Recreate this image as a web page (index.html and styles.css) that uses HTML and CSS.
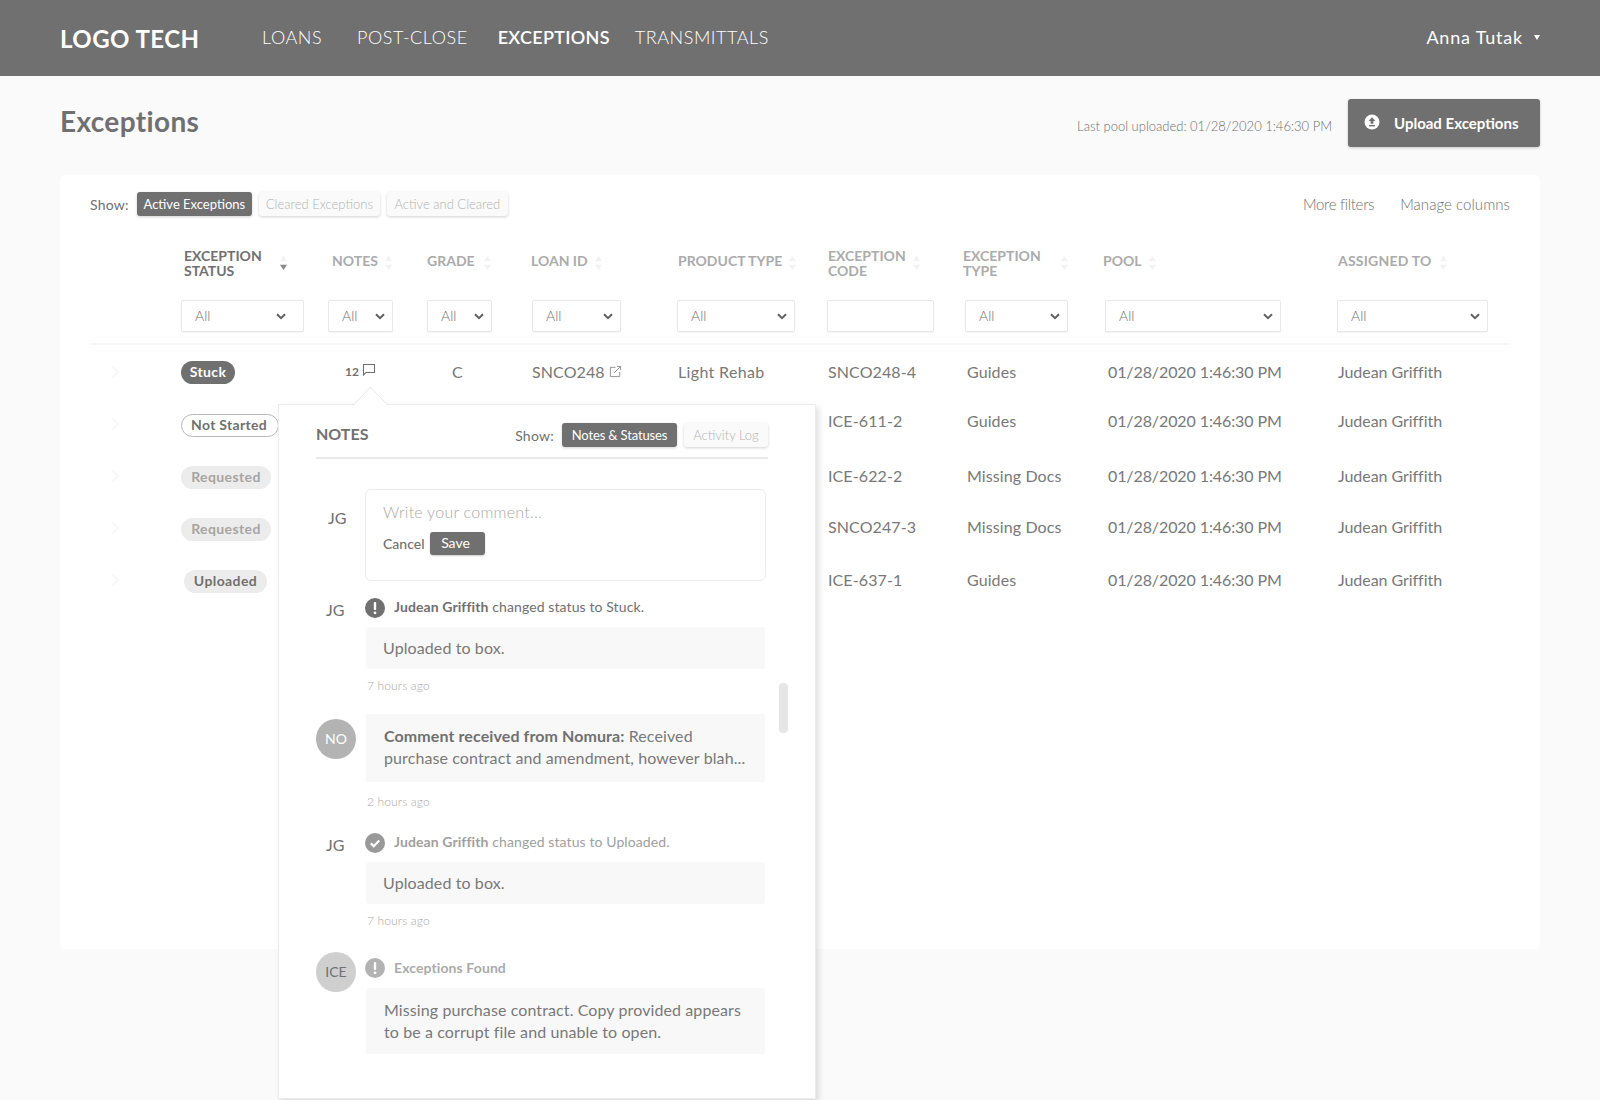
FILE: index.html
```html
<!DOCTYPE html>
<html lang="en">
<head>
<meta charset="utf-8">
<title>Exceptions</title>
<link rel="stylesheet" href="styles.css">
</head>
<body>
<div class="page">
  <header class="topbar">
    <div class="logo">LOGO TECH</div>
    <nav class="nav">
      <a class="nav-loans">LOANS</a>
      <a class="nav-post">POST-CLOSE</a>
      <a class="nav-exc">EXCEPTIONS</a>
      <a class="nav-trans">TRANSMITTALS</a>
    </nav>
    <div class="user">Anna Tutak <span class="caret"></span></div>
  </header>

  <section class="title-row">
    <h1 class="title">Exceptions</h1>
    <div class="title-right">
      <span class="last-pool">Last pool uploaded: 01/28/2020 1:46:30 PM</span>
      <button class="upload-btn">
        <svg class="upload-icon" viewBox="0 0 16 16"><circle cx="8" cy="8" r="7.5" fill="#fff"/><path d="M8 3.2 11.4 7H9.4V9.8H6.6V7H4.6Z" fill="#707070"/><rect x="5" y="11" width="6" height="1.4" fill="#707070"/></svg>
        <span class="upload-label">Upload Exceptions</span>
      </button>
    </div>
  </section>

  <main class="card">
    <div class="toolbar">
      <div class="toggle">
        <span class="show">Show:</span>
        <span class="pill on w-active">Active Exceptions</span>
        <span class="pill w-cleared">Cleared Exceptions</span>
        <span class="pill w-both">Active and Cleared</span>
      </div>
      <div class="links"><a class="more">More filters</a><a class="manage">Manage columns</a></div>
    </div>

    <div class="row head">
      <div></div>
      <div class="th th-status"><span class="lbl dark">EXCEPTION<br>STATUS</span><svg class="sort" viewBox="0 0 10 18"><path d="M5 1 9 7H1Z" fill="#f2f2f2"/><path d="M5 17 1 11H9Z" fill="#8a8a8a"/></svg></div>
      <div class="th th-notes one"><span class="lbl">NOTES</span><svg class="sort" viewBox="0 0 10 18"><path d="M5 1 9 7H1Z" fill="#f2f2f2"/><path d="M5 17 1 11H9Z" fill="#f2f2f2"/></svg></div>
      <div class="th th-grade one"><span class="lbl">GRADE</span><svg class="sort" viewBox="0 0 10 18"><path d="M5 1 9 7H1Z" fill="#f2f2f2"/><path d="M5 17 1 11H9Z" fill="#f2f2f2"/></svg></div>
      <div class="th th-loan one"><span class="lbl">LOAN ID</span><svg class="sort" viewBox="0 0 10 18"><path d="M5 1 9 7H1Z" fill="#f2f2f2"/><path d="M5 17 1 11H9Z" fill="#f2f2f2"/></svg></div>
      <div class="th th-prod one"><span class="lbl">PRODUCT TYPE</span><svg class="sort" viewBox="0 0 10 18"><path d="M5 1 9 7H1Z" fill="#f2f2f2"/><path d="M5 17 1 11H9Z" fill="#f2f2f2"/></svg></div>
      <div class="th th-code"><span class="lbl">EXCEPTION<br>CODE</span><svg class="sort" viewBox="0 0 10 18"><path d="M5 1 9 7H1Z" fill="#f2f2f2"/><path d="M5 17 1 11H9Z" fill="#f2f2f2"/></svg></div>
      <div class="th th-type"><span class="lbl">EXCEPTION<br>TYPE</span><svg class="sort" viewBox="0 0 10 18"><path d="M5 1 9 7H1Z" fill="#f2f2f2"/><path d="M5 17 1 11H9Z" fill="#f2f2f2"/></svg></div>
      <div class="th th-pool one"><span class="lbl">POOL</span><svg class="sort" viewBox="0 0 10 18"><path d="M5 1 9 7H1Z" fill="#f2f2f2"/><path d="M5 17 1 11H9Z" fill="#f2f2f2"/></svg></div>
      <div class="th th-assign one"><span class="lbl">ASSIGNED TO</span><svg class="sort" viewBox="0 0 10 18"><path d="M5 1 9 7H1Z" fill="#f2f2f2"/><path d="M5 17 1 11H9Z" fill="#f2f2f2"/></svg></div>
    </div>

    <div class="row filters">
      <div></div>
      <select class="f f-status"><option>All</option></select>
      <select class="f f-notes"><option>All</option></select>
      <select class="f f-grade"><option>All</option></select>
      <select class="f f-loan"><option>All</option></select>
      <select class="f f-prod"><option>All</option></select>
      <input class="f f-code" type="text" aria-label="Exception code">
      <select class="f f-type"><option>All</option></select>
      <select class="f f-pool"><option>All</option></select>
      <select class="f f-assign"><option>All</option></select>
    </div>

    <div class="rows">
      <div class="row data">
        <svg class="chev" viewBox="0 0 8 14"><path d="M1 1 7 7 1 13" fill="none" stroke="#f6f6f6" stroke-width="1.5"/></svg>
        <div class="pill-cell first"><span class="status stuck">Stuck</span></div>
        <div class="notes-cell"><b>12</b><svg class="bubble" viewBox="0 0 14 14"><path d="M1.5 1.5H12.5V9.5H4L1.5 12Z" fill="none" stroke="#707070" stroke-width="1.1"/></svg></div>
        <div class="cell td-grade">C</div>
        <div class="cell td-loan">SNCO248<svg class="ext" viewBox="0 0 14 14"><path d="M7 2.5H1.5V12.5H11.5V7.5M5.5 8.5 12.5 1.5M8.5 1.5H12.5V5.5" fill="none" stroke="#8c8c8c" stroke-width="1"/></svg></div>
        <div class="cell td-prod">Light Rehab</div>
        <div class="cell td-code">SNCO248-4</div>
        <div class="cell td-type">Guides</div>
        <div class="cell td-pool">01/28/2020 1:46:30 PM</div>
        <div class="cell td-assign">Judean Griffith</div>
      </div>
      <div class="row data up3">
        <svg class="chev" viewBox="0 0 8 14"><path d="M1 1 7 7 1 13" fill="none" stroke="#f6f6f6" stroke-width="1.5"/></svg>
        <div class="pill-cell"><span class="status outline">Not Started</span></div>
        <div></div><div></div><div></div><div></div>
        <div class="cell td-code">ICE-611-2</div>
        <div class="cell td-type">Guides</div>
        <div class="cell td-pool">01/28/2020 1:46:30 PM</div>
        <div class="cell td-assign">Judean Griffith</div>
      </div>
      <div class="row data">
        <svg class="chev" viewBox="0 0 8 14"><path d="M1 1 7 7 1 13" fill="none" stroke="#f6f6f6" stroke-width="1.5"/></svg>
        <div class="pill-cell"><span class="status req">Requested</span></div>
        <div></div><div></div><div></div><div></div>
        <div class="cell td-code">ICE-622-2</div>
        <div class="cell td-type">Missing Docs</div>
        <div class="cell td-pool">01/28/2020 1:46:30 PM</div>
        <div class="cell td-assign">Judean Griffith</div>
      </div>
      <div class="row data up1">
        <svg class="chev" viewBox="0 0 8 14"><path d="M1 1 7 7 1 13" fill="none" stroke="#f6f6f6" stroke-width="1.5"/></svg>
        <div class="pill-cell"><span class="status req">Requested</span></div>
        <div></div><div></div><div></div><div></div>
        <div class="cell td-code">SNCO247-3</div>
        <div class="cell td-type">Missing Docs</div>
        <div class="cell td-pool">01/28/2020 1:46:30 PM</div>
        <div class="cell td-assign">Judean Griffith</div>
      </div>
      <div class="row data">
        <svg class="chev" viewBox="0 0 8 14"><path d="M1 1 7 7 1 13" fill="none" stroke="#f6f6f6" stroke-width="1.5"/></svg>
        <div class="pill-cell"><span class="status upl">Uploaded</span></div>
        <div></div><div></div><div></div><div></div>
        <div class="cell td-code">ICE-637-1</div>
        <div class="cell td-type">Guides</div>
        <div class="cell td-pool">01/28/2020 1:46:30 PM</div>
        <div class="cell td-assign">Judean Griffith</div>
      </div>
    </div>
  </main>

  <aside class="pop">
    <svg class="pop-arrow" viewBox="0 0 37 20"><path d="M1 19.5 18.5 1 36 19.5" fill="#fff" stroke="#e6e6e6" stroke-width="1"/><rect x="2" y="19" width="33" height="1" fill="#fff"/></svg>
    <span class="scroll-thumb"></span>
    <div class="pop-head">
      <div class="pop-title">NOTES</div>
      <div class="toggle">
        <span class="show">Show:</span>
        <span class="pill on w-notes">Notes &amp; Statuses</span>
        <span class="pill w-log">Activity Log</span>
      </div>
    </div>

    <div class="entry e-input">
      <div class="who who-input">JG</div>
      <div class="compose">
        <div class="placeholder">Write your comment...</div>
        <div class="compose-actions"><span class="cancel">Cancel</span><span class="save">Save</span></div>
      </div>
    </div>

    <div class="entry e-first">
      <div class="who">JG</div>
      <div>
        <div class="log"><svg class="log-icon" viewBox="0 0 20 20"><circle cx="10" cy="10" r="10" fill="#707070"/><rect x="8.8" y="4" width="2.4" height="8" rx="1" fill="#fff"/><circle cx="10" cy="14.8" r="1.4" fill="#fff"/></svg><span class="log-text"><b>Judean Griffith</b> changed status to Stuck.</span></div>
        <div class="msg">Uploaded to box.</div>
        <div class="ago">7 hours ago</div>
      </div>
    </div>

    <div class="entry e-no">
      <div class="avatar no"><span>NO</span></div>
      <div>
        <div class="msg msg-two"><b>Comment received from Nomura:</b> Received<br>purchase contract and amendment, however blah...</div>
        <div class="ago ago-no">2 hours ago</div>
      </div>
    </div>

    <div class="entry e-next">
      <div class="who">JG</div>
      <div>
        <div class="log faded"><svg class="log-icon" viewBox="0 0 20 20"><circle cx="10" cy="10" r="10" fill="#999"/><path d="M5.8 10.4 8.8 13.2 14.2 7.4" fill="none" stroke="#fff" stroke-width="2.2"/></svg><span class="log-text"><b>Judean Griffith</b> changed status to Uploaded.</span></div>
        <div class="msg">Uploaded to box.</div>
        <div class="ago">7 hours ago</div>
      </div>
    </div>

    <div class="entry e-next">
      <div class="avatar ice"><span>ICE</span></div>
      <div class="ice-body">
        <div class="log fainter"><svg class="log-icon" viewBox="0 0 20 20"><circle cx="10" cy="10" r="10" fill="#b3b3b3"/><rect x="8.8" y="4" width="2.4" height="8" rx="1" fill="#fff"/><circle cx="10" cy="14.8" r="1.4" fill="#fff"/></svg><span class="log-text ice-text"><b>Exceptions Found</b></span></div>
        <div class="msg msg-two ice-msg">Missing purchase contract. Copy provided appears<br>to be a corrupt file and unable to open.</div>
      </div>
    </div>
  </aside>
</div>
</body>
</html>
```
FILE: styles.css
```css
* { box-sizing: border-box; }
html, body { margin: 0; padding: 0; }
body {
  background: #fafafa;
  color: #707070;
  font-family: "Lato", "Open Sans", sans-serif;
  font-size: 16px;
}
.page { position: relative; width: 1600px; height: 1100px; overflow: hidden; }

/* top bar */
.topbar {
  height: 76px;
  background: #707070;
  color: #fff;
  display: flex;
  align-items: center;
  padding: 0 60px;
}
.logo { width: 202px; font-size: 24px; font-weight: 700; letter-spacing: .45px; }
.nav { display: flex; font-size: 18px; font-weight: 300; margin-top: -2px; letter-spacing: .55px; }
.nav-post { margin-left: 35px; }
.nav-exc { margin-left: 30px; font-weight: 600; letter-spacing: .3px; }
.nav-trans { margin-left: 25px; }
.user { margin-left: auto; font-size: 18px; font-weight: 400; display: flex; align-items: center; margin-top: -2px; letter-spacing: .8px; }
.caret {
  margin-left: 11px;
  border-left: 3px solid transparent;
  border-right: 3px solid transparent;
  border-top: 5px solid #fff;
}

/* title */
.title-row {
  display: flex;
  align-items: center;
  justify-content: space-between;
  padding: 23px 60px 0;
}
.title { margin: 0 0 4px; font-size: 28px; font-weight: 700; letter-spacing: .35px; }
.title-right { display: flex; align-items: center; }
.last-pool { font-size: 13px; font-weight: 300; margin: 6px 16px 0 0; }
.upload-btn {
  width: 192px;
  height: 48px;
  border: 0;
  border-radius: 3px;
  background: #707070;
  color: #fff;
  font: 700 15px "Lato", sans-serif;
  display: flex;
  align-items: center;
  padding: 0 0 0 16px;
  box-shadow: 0 1px 3px rgba(0,0,0,.2);
  gap: 14px;
}
.upload-icon { width: 16px; height: 16px; margin-top: -2px; }

/* card */
.card {
  margin: 28px 60px 0;
  height: 774px;
  background: #fff;
  border-radius: 6px;
  padding: 17px 30px 0;
}
.toolbar { display: flex; justify-content: space-between; align-items: center; height: 24px; }
.toggle { display: flex; align-items: center; }
.show { font-size: 14px; font-weight: 400; margin-right: 8px; letter-spacing: .25px; }
.pill {
  display: flex;
  align-items: center;
  justify-content: center;
  height: 24px;
  border-radius: 3px;
  background: #fafafa;
  color: #b3b3b3;
  font-size: 13px;
  font-weight: 300;
  margin-right: 7px;
  padding-bottom: 1px;
  box-shadow: 0 1px 3px rgba(0,0,0,.18);
}
.pill.on { background: #707070; color: #fff; font-weight: 400; }
.w-active { width: 115px; }
.w-cleared { width: 121px; }
.w-both { width: 121px; }
.w-notes { width: 115px; letter-spacing: -.15px; }
.w-log { width: 84px; margin-right: 0; }
.links { display: flex; gap: 26px; font-size: 15px; font-weight: 300; }
.more { letter-spacing: -.3px; }
.manage { letter-spacing: .05px; }

/* table */
.row {
  display: grid;
  grid-template-columns: 91px 147px 99px 105px 145px 150px 138px 140px 232px 173px;
}
.head { margin-top: 24px; height: 45px; align-items: center; }
.th { display: flex; align-items: center; }
.th.one .lbl { margin-bottom: 4px; }
.lbl { font-size: 14px; font-weight: 700; line-height: 15px; color: #ababab; }
.lbl.dark { color: #707070; }
.sort { width: 9px; height: 16px; margin-left: 6px; flex: none; }
.th-status { padding-left: 3px; }
.th-status .sort { margin-left: 17px; }
.th-notes { padding-left: 4px; }
.th-grade .sort { margin-left: 8px; }
.th-loan { margin-left: -1px; }
.th-prod { padding-left: 1px; }
.th-code { padding-left: 1px; }
.th-type { margin-left: -2px; }
.th-type .sort { margin-left: 19px; }
.th-pool { margin-left: -2px; }
.th-assign { padding-left: 1px; }
.th-assign .lbl { letter-spacing: .2px; }
.th-assign .sort { margin-left: 8px; }

.filters { margin-top: 15px; padding-bottom: 11px; border-bottom: 2px solid #f7f7f7; height: 45px; }
.f {
  height: 32px;
  background-color: #fff;
  border: 1px solid #e8e8e8;
  border-radius: 2px;
  color: #707070;
  font: 300 14px "Lato", sans-serif;
  padding: 0 0 2px 13px;
  box-shadow: 0 1px 1px rgba(0,0,0,.05);
}
select.f {
  appearance: none;
  background-image: url("data:image/svg+xml,%3Csvg xmlns='http://www.w3.org/2000/svg' width='10' height='7' viewBox='0 0 10 7'%3E%3Cpath d='M1 1.2 5 5.2 9 1.2' fill='none' stroke='%23606060' stroke-width='2'/%3E%3C/svg%3E");
  background-repeat: no-repeat;
  background-position: right 7px center;
}
.f-status { width: 123px; background-position: right 17px center !important; }
.f-notes { width: 65px; }
.f-grade { width: 65px; }
.f-loan { width: 89px; }
.f-prod { width: 118px; }
.f-code { width: 107px; }
.f-type { width: 103px; }
.f-pool { width: 176px; }
.f-assign { width: 151px; }

.rows { padding-top: 1px; }
.data { height: 52px; align-items: center; font-size: 16px; font-weight: 400; color: #787878; }
.cell { margin-bottom: 2px; letter-spacing: .1px; }
.chev { width: 8px; height: 14px; margin-left: 21px; }
.status {
  display: inline-flex;
  align-items: center;
  justify-content: center;
  height: 23px;
  border-radius: 12px;
  font-size: 14px;
  font-weight: 700;
  letter-spacing: .4px;
  padding-bottom: 3px;
}
.pill-cell { display: flex; margin-top: 3px; }
.pill-cell.first { margin-top: 1px; }
.stuck { width: 54px; background: #707070; color: #fff; }
.outline { width: 98px; background: #fff; border: 1px solid #b8b8b8; color: #707070; padding-right: 2px; letter-spacing: .3px; }
.req { width: 90px; background: #ececec; color: #a5a5a5; }
.upl { width: 83px; margin-left: 3px; background: #ececec; color: #707070; }
.notes-cell { display: flex; align-items: center; padding-left: 17px; font-size: 12px; margin-top: -2px; color: #707070; }
.notes-cell b { font-weight: 700; }
.bubble { width: 14px; height: 14px; margin-left: 3px; margin-top: -2px; }
.td-grade { padding-left: 25px; }
.td-loan { display: flex; align-items: center; }
.ext { width: 13px; height: 13px; margin-left: 4px; }
.td-prod { padding-left: 1px; letter-spacing: .35px; }
.td-code { padding-left: 1px; }
.td-type { padding-left: 2px; }
.td-pool { padding-left: 3px; letter-spacing: -.1px; }
.td-assign { padding-left: 1px; letter-spacing: -.05px; }
.up3 .cell { margin-bottom: 8px; }
.up1 .cell { margin-bottom: 4px; }

/* notes popover */
.pop {
  position: absolute;
  left: 278px;
  top: 404px;
  width: 538px;
  height: 695px;
  background: #fff;
  border: 1px solid #ececec;
  box-shadow: 3px 3px 6px rgba(0,0,0,.12);
  padding: 0 47px 0 37px;
}
.pop-arrow { position: absolute; left: 73px; top: -19px; width: 37px; height: 20px; }
.scroll-thumb {
  position: absolute;
  left: 500px;
  top: 278px;
  width: 9px;
  height: 50px;
  border-radius: 4px;
  background: #e6e6e6;
}
.pop-head {
  display: flex;
  justify-content: space-between;
  align-items: center;
  padding: 18px 0 10px;
  border-bottom: 2px solid #e9e9e9;
}
.pop-title { font-size: 16px; font-weight: 700; margin-bottom: 3px; }
.entry { display: grid; grid-template-columns: 50px 399px; }
.e-input { margin-top: 30px; }
.e-first { margin-top: 17px; }
.e-no { margin-top: 20px; }
.e-next { margin-top: 23px; }
.who { padding: 2px 0 0 10px; font-size: 16px; font-weight: 400; line-height: 20px; }
.who-input { padding: 19px 0 0 12px; }
.compose { height: 92px; width: 401px; margin-left: -1px; border: 1px solid #ececec; border-radius: 6px; padding: 12px 17px; }
.placeholder { font-size: 16px; font-weight: 300; color: #a8a8a8; line-height: 20px; letter-spacing: .25px; }
.compose-actions { display: flex; align-items: center; margin-top: 10px; }
.cancel { font-size: 14px; font-weight: 500; margin: -1px 5px 0 0; }
.save {
  width: 55px;
  height: 23px;
  display: flex;
  align-items: center;
  justify-content: center;
  background: #707070;
  color: #fff;
  border-radius: 3px;
  font-size: 14px;
  font-weight: 400;
  padding: 0 3px 2px 0;
  box-shadow: 0 1px 2px rgba(0,0,0,.2);
}
.log { display: flex; align-items: center; height: 20px; font-size: 14px; font-weight: 400; margin-left: -1px; letter-spacing: .1px; }
.log b { font-weight: 700; }
.log-icon { width: 20px; height: 20px; margin-right: 9px; flex: none; }
.log-text { margin-top: -4px; }
.ice-text { margin-top: -2px; }
.faded { color: #a0a0a0; }
.fainter { color: #ababab; }
.msg {
  margin-top: 9px;
  height: 42px;
  background: #f8f8f8;
  border-radius: 3px;
  padding: 0 17px;
  font-size: 16px;
  font-weight: 400;
  line-height: 42px;
  letter-spacing: .1px;
  color: #787878;
}
.msg b { font-weight: 700; color: #707070; }
.msg-two { margin-top: 0; height: 68px; padding: 11px 18px; line-height: 22px; }
.ago { margin: 9px 0 0 1px; font-size: 12px; line-height: 16px; font-weight: 300; color: #a8a8a8; letter-spacing: .15px; }
.ago-no { margin-top: 12px; }
.avatar {
  width: 40px;
  height: 40px;
  border-radius: 50%;
  display: flex;
  align-items: center;
  justify-content: center;
  font-size: 14px;
}
.avatar span { margin-top: -2px; }
.no { margin-top: 5px; background: #b3b3b3; color: #fff; }
.ice { background: #cfcfcf; color: #707070; }
.ice-body { padding-top: 6px; }
.ice-msg { margin-top: 10px; height: 66px; padding-top: 11px; }
```
